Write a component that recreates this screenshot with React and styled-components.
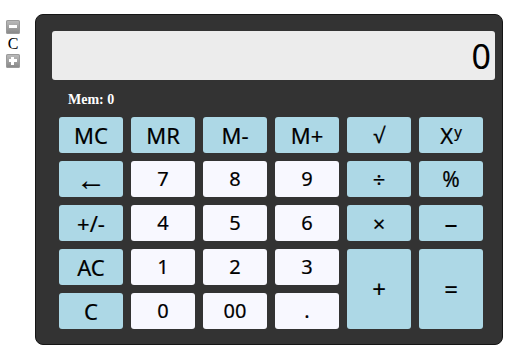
import React from "react";
import styled, { createGlobalStyle } from "styled-components";

const GlobalStyle = createGlobalStyle`
  body {
    margin: 0;
    background: #fff;
    font-family: "Liberation Serif", serif;
  }
`;

const Page = styled.div`
  display: flex;
  align-items: flex-start;
  gap: 15px;
  padding: 14px 0 0 6px;
`;

const Controls = styled.div`
  width: 14px;
  margin-top: 6px;
  display: flex;
  flex-direction: column;
  align-items: center;
`;

const ToggleBtn = styled.span`
  position: relative;
  display: block;
  width: 14px;
  height: 14px;
  border-radius: 2px;
  background: linear-gradient(#bebebe, #858585);
  box-shadow: inset 0 0 0 1px #9a9a9a;
  &:before,
  &:after {
    content: "";
    position: absolute;
    background: #fff;
  }
  &:before {
    left: 3px;
    top: 5px;
    width: 8px;
    height: 3px;
  }
  &:after {
    display: ${(p) => (p.$plus ? "block" : "none")};
    left: 5px;
    top: 3px;
    width: 3px;
    height: 8px;
  }
`;

const ModeLabel = styled.span`
  font-family: "Liberation Serif", serif;
  font-size: 16px;
  line-height: 20px;
  color: #000;
`;

const Calc = styled.div`
  width: 443px;
  padding: 16px 7px 15px 16px;
  background: #333;
  border: 1px solid #151515;
  border-radius: 8px;
`;

const Display = styled.div`
  height: 49px;
  background: #ececec;
  border-radius: 3px;
  display: flex;
  align-items: center;
  justify-content: flex-end;
  padding-right: 4px;
  box-sizing: border-box;
  font-family: "Noto Sans", "Open Sans", sans-serif;
  font-size: 34px;
  color: #000;
`;

const MemLine = styled.div`
  height: 37px;
  box-sizing: border-box;
  padding: 11px 0 0 16px;
  font-family: "Liberation Serif", serif;
  font-size: 14px;
  line-height: 17px;
  color: #fff;
  font-weight: bold;
`;

const Keys = styled.div`
  margin-left: 7px;
  display: grid;
  grid-template-columns: repeat(6, 64px);
  grid-auto-rows: 36px;
  gap: 8px;
`;

const Key = styled.button`
  border: none;
  border-radius: 3px;
  padding: 0;
  background: ${(p) => (p.$digit ? "#f8f8ff" : "#add8e6")};
  color: #000;
  font-family: "Noto Sans", "Open Sans", sans-serif;
  font-size: ${(p) => p.$size || 20}px;
  line-height: 1;
  grid-row: ${(p) => (p.$tall ? "span 2" : "auto")};
  display: flex;
  align-items: center;
  justify-content: center;
  -webkit-text-stroke: 0.2px #000;
  sup {
    font-size: 15px;
    line-height: 0;
    position: relative;
    top: -4px;
    margin-left: 1px;
  }
`;

const keys = [
  { t: "MC", s: 22 },
  { t: "MR", s: 22 },
  { t: "M-", s: 22 },
  { t: "M+", s: 22 },
  { t: "√", s: 21 },
  { t: "X", sup: "y", s: 22 },
  { t: "←", s: 30 },
  { t: "7", d: true },
  { t: "8", d: true },
  { t: "9", d: true },
  { t: "÷", s: 22 },
  { t: "%", s: 21 },
  { t: "+/-", s: 22 },
  { t: "4", d: true },
  { t: "5", d: true },
  { t: "6", d: true },
  { t: "×", s: 22 },
  { t: "–", s: 26 },
  { t: "AC", s: 22 },
  { t: "1", d: true },
  { t: "2", d: true },
  { t: "3", d: true },
  { t: "+", s: 24, tall: true },
  { t: "=", s: 24, tall: true },
  { t: "C", s: 22 },
  { t: "0", d: true },
  { t: "00", d: true },
  { t: ".", d: true },
];

export default function App() {
  return (
    <>
      <GlobalStyle />
      <Page>
        <Controls>
          <ToggleBtn />
          <ModeLabel>C</ModeLabel>
          <ToggleBtn $plus />
        </Controls>
        <Calc>
          <Display>0</Display>
          <MemLine>Mem: 0</MemLine>
          <Keys>
            {keys.map((k, i) => (
              <Key key={i} $digit={k.d} $tall={k.tall} $size={k.s}>
                {k.t}
                {k.sup && <sup>{k.sup}</sup>}
              </Key>
            ))}
          </Keys>
        </Calc>
      </Page>
    </>
  );
}
